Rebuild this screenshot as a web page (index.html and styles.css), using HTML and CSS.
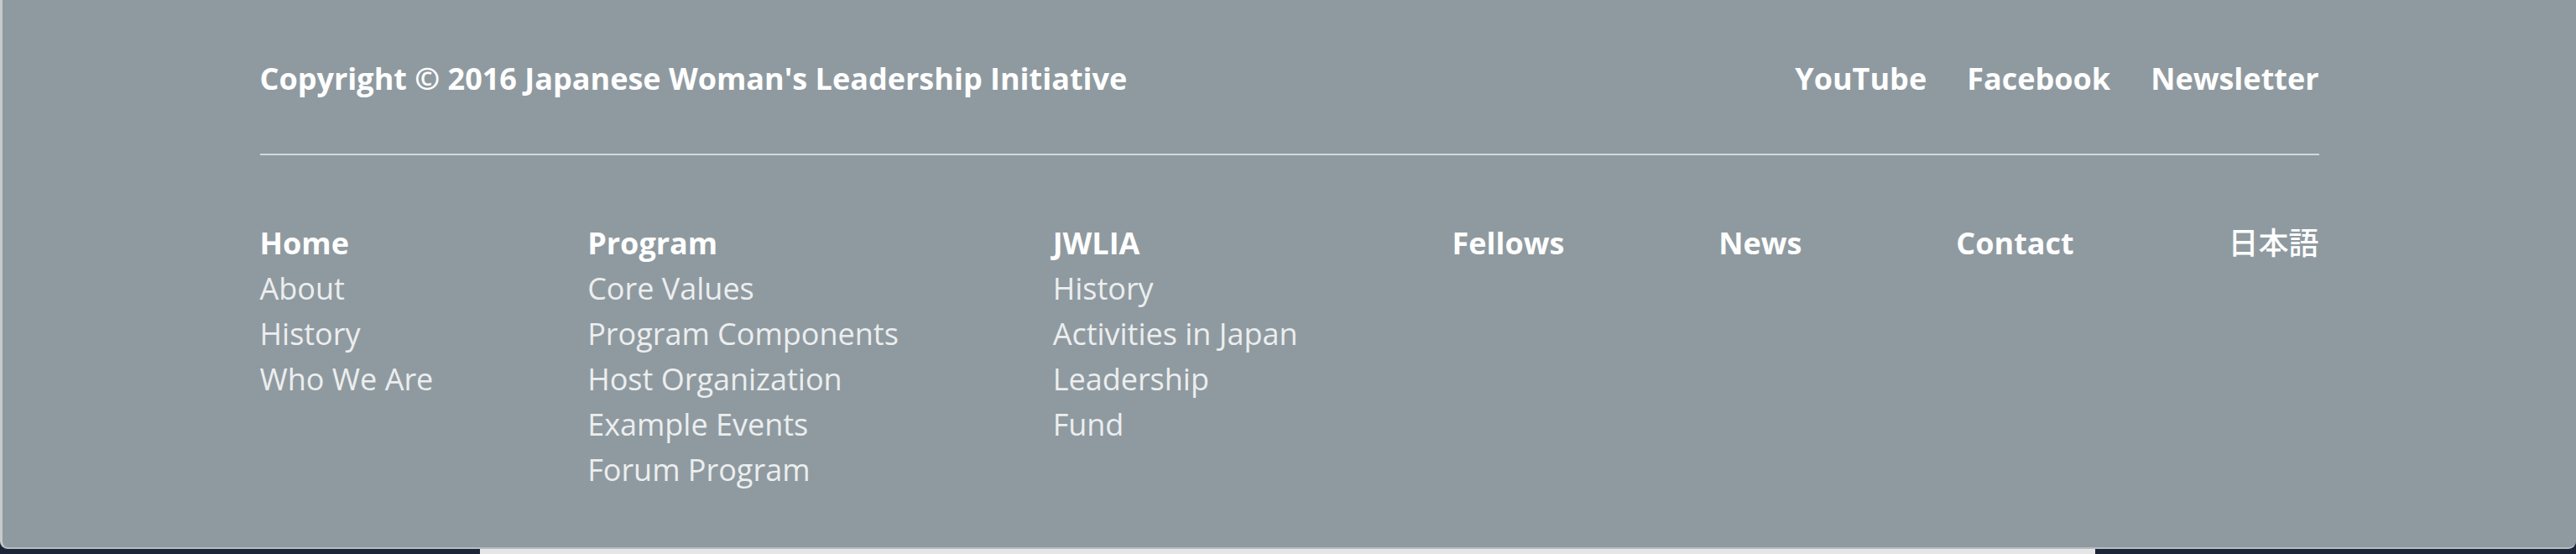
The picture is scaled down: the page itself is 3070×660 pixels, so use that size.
FILE: index.html
```html
<!DOCTYPE html>
<html lang="en">
<head>
<meta charset="utf-8">
<title>Footer</title>
<link rel="stylesheet" href="styles.css">
</head>
<body>
<footer class="footer">
  <div class="container">
    <div class="top-row">
      <p class="copyright">Copyright © 2016 Japanese Woman's Leadership Initiative</p>
      <nav class="social">
        <a href="#">YouTube</a>
        <a href="#">Facebook</a>
        <a href="#">Newsletter</a>
      </nav>
    </div>
    <hr class="divider">
    <nav class="sitemap">
      <ul class="col">
        <li class="head"><a href="#">Home</a></li>
        <li><a href="#">About</a></li>
        <li><a href="#">History</a></li>
        <li><a href="#">Who We Are</a></li>
      </ul>
      <ul class="col">
        <li class="head"><a href="#">Program</a></li>
        <li><a href="#">Core Values</a></li>
        <li><a href="#">Program Components</a></li>
        <li><a href="#">Host Organization</a></li>
        <li><a href="#">Example Events</a></li>
        <li><a href="#">Forum Program</a></li>
      </ul>
      <ul class="col">
        <li class="head"><a href="#">JWLIA</a></li>
        <li><a href="#">History</a></li>
        <li><a href="#">Activities in Japan</a></li>
        <li><a href="#">Leadership</a></li>
        <li><a href="#">Fund</a></li>
      </ul>
      <ul class="col">
        <li class="head"><a href="#">Fellows</a></li>
      </ul>
      <ul class="col">
        <li class="head"><a href="#">News</a></li>
      </ul>
      <ul class="col">
        <li class="head"><a href="#">Contact</a></li>
      </ul>
      <ul class="col">
        <li class="head jp"><a href="#" lang="ja">日本語</a></li>
      </ul>
    </nav>
  </div>
</footer>
<div class="under">
  <div class="under-dark"></div>
  <div class="under-light"></div>
  <div class="under-dark"></div>
</div>
</body>
</html>
```

FILE: styles.css
```css
html, body {
  margin: 0;
  padding: 0;
}

body {
  background: #1b2336;
  font-family: "Open Sans", "Noto Sans", "Noto Sans CJK JP", sans-serif;
  font-size: 36px;
  line-height: 54px;
  color: #f3f4f5;
  overflow: hidden;
}

a {
  color: inherit;
  text-decoration: none;
}

.footer {
  height: 654px;
  box-sizing: border-box;
  background: #8f9aa0;
  border-left: 3px solid #c6cbce;
  border-bottom: 2px solid #b7bdc0;
  border-radius: 0 0 9px 9px;
  padding-top: 67px;
}

.container {
  width: 2454px;
  margin: 0 auto;
}

.top-row {
  display: flex;
  justify-content: space-between;
  align-items: center;
}

.copyright {
  margin: 0;
  font-weight: 700;
  color: #ffffff;
}

.social {
  display: flex;
  gap: 48px;
  font-weight: 700;
  color: #ffffff;
}

.divider {
  margin: 62px 0 0;
  border: 0;
  height: 2px;
  background: #d4d8da;
}

.sitemap {
  display: flex;
  justify-content: space-between;
  margin-top: 78px;
}

.col {
  list-style: none;
  margin: 0;
  padding: 0;
}

.col li {
  color: #eceeef;
}

.col .head {
  font-weight: 700;
  color: #ffffff;
}

.col .jp {
  font-weight: 500;
}

.under {
  display: flex;
  height: 6px;
}

.under-dark {
  flex: 0 0 572px;
  background: #1c2438;
}

.under-light {
  flex: 1;
  background: #e6e6e9;
}

.under-dark:last-child {
  flex: 0 0 573px;
}
```
